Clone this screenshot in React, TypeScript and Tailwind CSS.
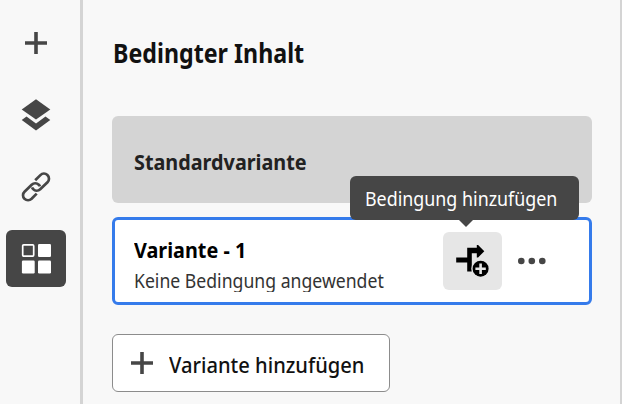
import React from "react";

const sans = "font-['Noto_Sans',sans-serif]";

function Plus() {
  return (
    <svg width="22" height="22" viewBox="0 0 22 22" className="shrink-0">
      <path d="M0 9.2H9.2V0h3.6v9.2H22v3.6H12.8V22H9.2V12.8H0z" fill="#464646" />
    </svg>
  );
}

function Layers() {
  return (
    <svg width="30" height="32" viewBox="0 0 30 32" fill="#464646">
      <path d="M15 0.3 29.3 10.4 15 20.5 0.7 10.4z" />
      <path d="M0.7 21.1 5.5 17.6 15 24.4 24.5 17.6 29.3 21.1 15 31.5z" />
    </svg>
  );
}

function Link() {
  return (
    <svg width="30" height="30" viewBox="0 0 30 30" fill="none" stroke="#464646" strokeWidth="2.7">
      <path d="M14.2 8.2 19.4 3.1C21.3 1.3 24.4 1.2 26.4 3.1 28.5 5.1 28.5 8.2 26.5 10.2L19.2 17.2C17.2 19.1 14.1 19.1 12.2 17.1 11.7 16.6 11.3 16 11.1 15.4" />
      <path d="M15.7 21.6 10.6 26.8C8.6 28.7 5.5 28.7 3.5 26.8 1.5 24.8 1.5 21.7 3.5 19.8L10.7 12.7C12.7 10.8 15.8 10.8 17.8 12.7 18.3 13.2 18.7 13.8 18.9 14.4" />
    </svg>
  );
}

function Tiles() {
  return (
    <svg width="30" height="30" viewBox="0 0 30 30" fill="#fff">
      <rect x="1.7" y="0.9" width="11" height="11.2" rx="1" fill="none" stroke="#fff" strokeWidth="1.7" />
      <rect x="17" y="0" width="13" height="13" rx="1.2" />
      <rect x="0.9" y="16.6" width="12.8" height="12.8" rx="1.2" />
      <rect x="17" y="16.6" width="13" height="12.8" rx="1.2" />
    </svg>
  );
}

function Branch() {
  return (
    <svg width="34" height="34" viewBox="0 0 34 34">
      <path d="M0.2 13.4H11.2V3.8H20.8V1H22.1L28.3 7.2 22.1 13.5H20.8V9.2H15.8V27.5H11.2V18.4H0.2z" fill="#000" />
      <circle cx="24.6" cy="24.7" r="9.3" fill="#e6e6e6" />
      <circle cx="24.6" cy="24.7" r="8" fill="#000" />
      <path d="M24.6 19.5v10.4M19.4 24.7h10.4" stroke="#e6e6e6" strokeWidth="2.6" />
    </svg>
  );
}

export default function App() {
  return (
    <div className={`flex h-[404px] w-[622px] overflow-hidden bg-[#f8f8f8] ${sans}`}>
      <nav className="flex w-[83px] shrink-0 flex-col border-r-[3px] border-[#d4d4d4]">
        <div className="flex h-[86px] w-[72px] items-center justify-center">
          <Plus />
        </div>
        <div className="flex h-[57px] w-[72px] items-center justify-center">
          <Layers />
        </div>
        <div className="flex h-[87px] w-[72px] items-center justify-center">
          <Link />
        </div>
        <div className="ml-1.5 flex h-[57px] w-[60px] items-center justify-center rounded-md bg-[#464646]">
          <Tiles />
        </div>
      </nav>
      <main className="flex grow flex-col border-r-2 border-[#d4d4d4] pl-[29px]">
        <div className="flex h-[116px] items-start pt-[35px] pl-px">
          <h1 className="origin-left scale-x-[0.893] whitespace-nowrap text-[26px] leading-9 font-bold text-[#111]">Bedingter Inhalt</h1>
        </div>
        <section className="flex h-[87px] w-[480px] items-center rounded-md bg-[#d4d4d4] pt-0.5 pl-[22px]">
          <h2 className="origin-left scale-x-[0.9] whitespace-nowrap text-[22px] leading-7 font-bold text-[#222]">Standardvariante</h2>
        </section>
        <section className="relative mt-3.5 flex h-[88px] w-[480px] rounded-md border-3 border-[#357beb] bg-white pl-[19px]">
          <div className="w-[309px] pt-[15px]">
            <h2 className="w-max origin-left scale-x-[0.9] whitespace-nowrap text-[22px] leading-[28px] font-bold text-black">Variante - 1</h2>
            <div className="h-[29px] overflow-hidden">
              <p className="w-max origin-left scale-x-[0.882] whitespace-nowrap pt-1 text-[20px] leading-7 text-[#333]">Keine Bedingung angewendet</p>
            </div>
          </div>
          <button className="mt-3 flex h-[58px] w-[59px] items-center justify-center rounded-md bg-[#e6e6e6]">
            <Branch />
          </button>
          <button className="ml-[15px] flex h-[82px] items-center">
            <svg width="30" height="8" viewBox="0 0 30 8" fill="#464646">
              <circle cx="4.3" cy="4" r="3.3" />
              <circle cx="14.8" cy="4" r="3.3" />
              <circle cx="25.3" cy="4" r="3.3" />
            </svg>
          </button>
          <div className="absolute -top-11 left-[235px] flex h-11 w-[229px] items-center rounded-md bg-[#464646] pt-0.5 pl-[15px]">
            <span className="origin-left scale-x-[0.893] whitespace-nowrap text-[20px] leading-7 text-white">Bedingung hinzufügen</span>
            <svg width="14" height="7" viewBox="0 0 14 7" className="absolute top-full left-[109px]">
              <path d="M0 0H14L7 7z" fill="#464646" />
            </svg>
          </div>
        </section>
        <button className="mt-[29px] flex h-[58px] w-[278px] items-center rounded-md border border-[#8c8c8c] bg-white pl-[18px]">
          <Plus />
          <span className="mt-0.5 ml-4 origin-left scale-x-[0.915] whitespace-nowrap text-[22px] leading-7 font-medium text-[#111]">Variante hinzufügen</span>
        </button>
      </main>
    </div>
  );
}
